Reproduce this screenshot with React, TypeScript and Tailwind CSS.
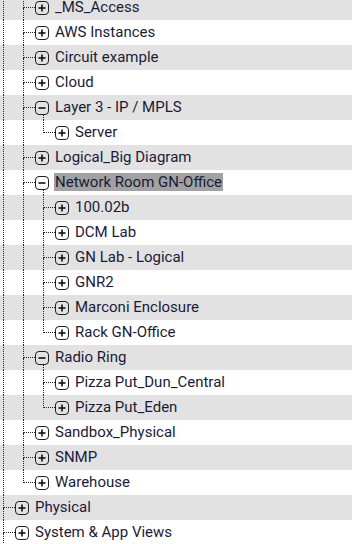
import React from "react";

type Node = {
    label: string;
    level: number;
    expanded?: boolean;
    last?: boolean;
    selected?: boolean;
};

const rows: Node[] = [
    { label: "_MS_Access", level: 1 },
    { label: "AWS Instances", level: 1 },
    { label: "Circuit example", level: 1 },
    { label: "Cloud", level: 1 },
    { label: "Layer 3 - IP / MPLS", level: 1, expanded: true },
    { label: "Server", level: 2, last: true },
    { label: "Logical_Big Diagram", level: 1 },
    { label: "Network Room GN-Office", level: 1, expanded: true, selected: true },
    { label: "100.02b", level: 2 },
    { label: "DCM Lab", level: 2 },
    { label: "GN Lab - Logical", level: 2 },
    { label: "GNR2", level: 2 },
    { label: "Marconi Enclosure", level: 2 },
    { label: "Rack GN-Office", level: 2, last: true },
    { label: "Radio Ring", level: 1, expanded: true },
    { label: "Pizza Put_Dun_Central", level: 2 },
    { label: "Pizza Put_Eden", level: 2, last: true },
    { label: "Sandbox_Physical", level: 1 },
    { label: "SNMP", level: 1 },
    { label: "Warehouse", level: 1, last: true },
    { label: "Physical", level: 0 },
    { label: "System & App Views", level: 0 },
];

const ToggleBox = ({ expanded }: { expanded?: boolean }) => (
    <div className="w-[14px] h-[14px] rounded-[4px] border border-[#1e1e1e] flex items-center justify-center">
        <svg width="10" height="10" viewBox="0 0 10 10">
            <line x1="1.5" y1="5" x2="8.5" y2="5" stroke="#111" strokeWidth="1.6" />
            {!expanded && (
                <line x1="5" y1="1.5" x2="5" y2="8.5" stroke="#111" strokeWidth="1.6" />
            )}
        </svg>
    </div>
);

const TreeRow = ({ node, index }: { node: Node; index: number }) => {
    // every ancestor line on screen keeps going past this row
    const ancestors = Array.from({ length: node.level });
    return (
        <div
            className={`flex items-stretch h-[25px] ${
                index % 2 === 0 ? "bg-[#e2e2e2]" : "bg-white"
            }`}
        >
            {ancestors.map((_, i) => (
                <div key={i} className="w-[20px] shrink-0">
                    <div className="ml-[3px] h-full border-l border-dotted border-[#222]" />
                </div>
            ))}
            <div className="w-[15px] shrink-0 flex flex-col">
                <div className="ml-[3px] h-[13px] border-l border-b border-dotted border-[#222]" />
                {!node.last && (
                    <div className="ml-[3px] flex-1 border-l border-dotted border-[#222]" />
                )}
            </div>
            <div className="w-[14px] shrink-0 flex flex-col">
                <div className="flex-1" />
                <ToggleBox expanded={node.expanded} />
                <div className="flex-1">
                    {node.expanded && (
                        <div className="ml-[8px] h-full border-l border-dotted border-[#222]" />
                    )}
                </div>
            </div>
            <div className="flex items-center pl-[5px] pb-[2px]">
                <span
                    className={`text-[15px] leading-[18px] text-[#1b1b38] whitespace-nowrap px-[1px] ${
                        node.selected ? "bg-[#a2a2a2]" : ""
                    }`}
                >
                    {node.label}
                </span>
            </div>
        </div>
    );
};

export default function App() {
    return (
        <div
            className="w-[352px] h-[544px] overflow-hidden bg-white"
            style={{ fontFamily: "Roboto, 'Liberation Sans', sans-serif" }}
        >
            <div className="-mt-[5px]">
                {rows.map((node, i) => (
                    <TreeRow key={node.label} node={node} index={i} />
                ))}
            </div>
        </div>
    );
}
